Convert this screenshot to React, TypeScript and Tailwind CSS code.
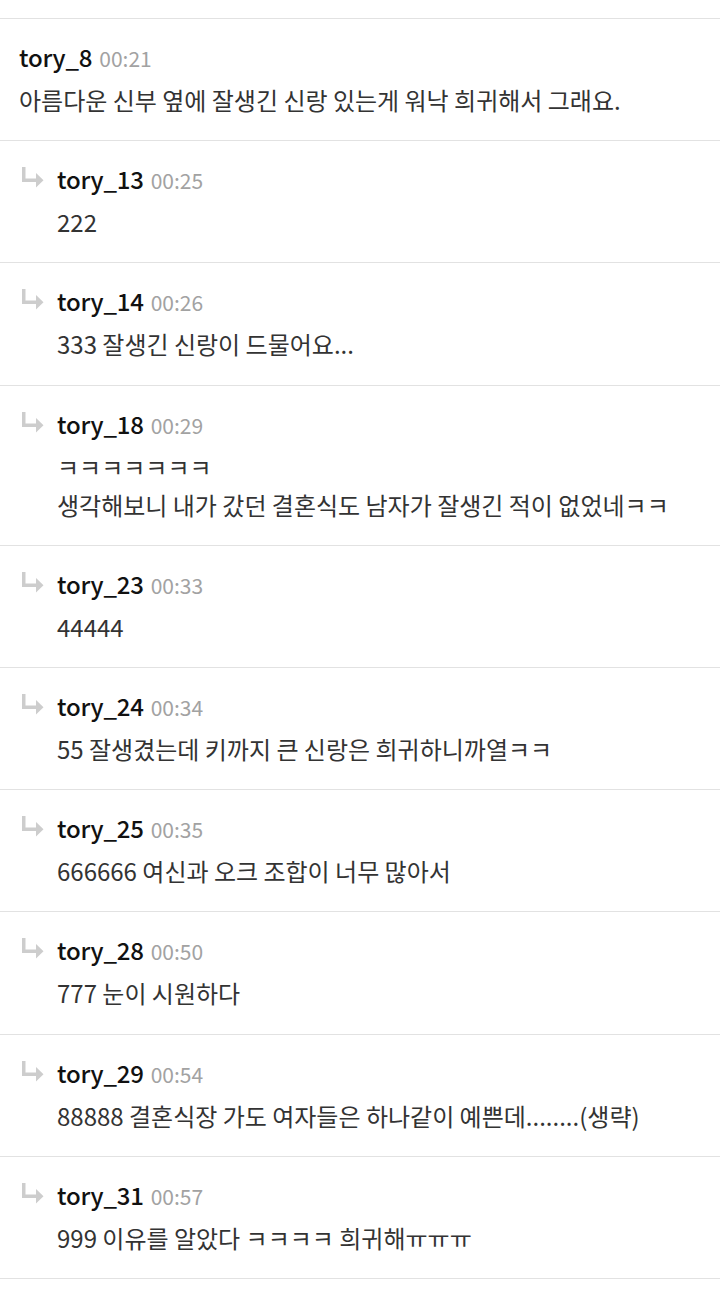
import React from 'react';

interface Comment {
    name: string;
    time: string;
    lines: string[];
    reply?: boolean;
}

const comments: Comment[] = [
    { name: 'tory_8', time: '00:21', lines: ['아름다운 신부 옆에 잘생긴 신랑 있는게 워낙 희귀해서 그래요.'] },
    { name: 'tory_13', time: '00:25', lines: ['222'], reply: true },
    { name: 'tory_14', time: '00:26', lines: ['333 잘생긴 신랑이 드물어요...'], reply: true },
    { name: 'tory_18', time: '00:29', lines: ['ㅋㅋㅋㅋㅋㅋㅋ', '생각해보니 내가 갔던 결혼식도 남자가 잘생긴 적이 없었네ㅋㅋ'], reply: true },
    { name: 'tory_23', time: '00:33', lines: ['44444'], reply: true },
    { name: 'tory_24', time: '00:34', lines: ['55 잘생겼는데 키까지 큰 신랑은 희귀하니까열ㅋㅋ'], reply: true },
    { name: 'tory_25', time: '00:35', lines: ['666666 여신과 오크 조합이 너무 많아서'], reply: true },
    { name: 'tory_28', time: '00:50', lines: ['777 눈이 시원하다'], reply: true },
    { name: 'tory_29', time: '00:54', lines: ['88888 결혼식장 가도 여자들은 하나같이 예쁜데........(생략)'], reply: true },
    { name: 'tory_31', time: '00:57', lines: ['999 이유를 알았다 ㅋㅋㅋㅋ 희귀해ㅠㅠㅠ'], reply: true },
];

// little grey "reply" arrow
const ReplyArrow = () => (
    <svg width="26" height="26" viewBox="0 0 26 26" className="shrink-0">
        <rect x="2" y="1" width="3.5" height="15" fill="#cdcdcd" />
        <rect x="2" y="12.5" width="15" height="3.5" fill="#cdcdcd" />
        <polygon points="16,7 23.5,14.25 16,21.5" fill="#cdcdcd" />
    </svg>
);

const CommentRow: React.FC<{ c: Comment }> = ({ c }) => (
    <div className="flex border-b border-[#e2e2e2] pt-[21px] pb-[21.2px]">
        {c.reply ? (
            <div className="w-[57px] pl-[20px] pt-[4px]">
                <ReplyArrow />
            </div>
        ) : (
            <div className="w-[19px]" />
        )}
        <div className="flex flex-col">
            <div className="flex items-baseline h-[34px] leading-[34px]">
                <span className="text-[24px] font-medium text-[#111] tracking-[-0.2px]">{c.name}</span>
                <span className="ml-[7px] text-[21px] text-[#a2a2a2]">{c.time}</span>
            </div>
            <div className="mt-[7px]">
                {c.lines.map((l, i) => (
                    <div key={i} className="text-[24px] leading-[38px] text-[#333] whitespace-nowrap">
                        {l}
                    </div>
                ))}
            </div>
        </div>
    </div>
);

export default function App() {
    return (
        <div className="w-[720px] min-h-[1297px] bg-white pt-[18px]" style={{ fontFamily: '"Noto Sans CJK KR", "Noto Sans", sans-serif' }}>
            <div className="border-t border-[#e2e2e2]">
                {comments.map((c, i) => (
                    <CommentRow key={i} c={c} />
                ))}
            </div>
        </div>
    );
}
